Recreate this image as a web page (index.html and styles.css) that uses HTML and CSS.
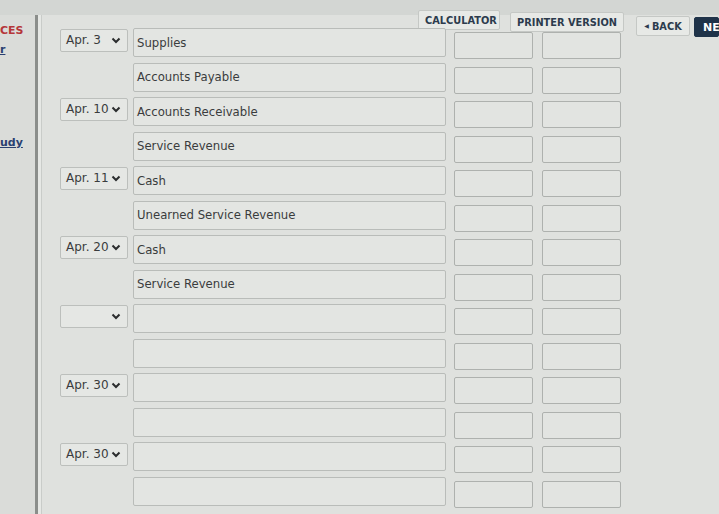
FILE: index.html
```html
<!DOCTYPE html>
<html>
<head>
<meta charset="utf-8">
<link rel="stylesheet" href="styles.css">
</head>
<body>
<div class="topstrip"></div>
<div class="page">
  <aside class="sidebar">
    <div class="side-item res">CES</div>
    <div class="side-item link">r</div>
    <div class="side-item link study">udy</div>
  </aside>
  <div class="divider"></div>
  <main class="main">
    <div class="toolbar">
      <button class="tbtn calc">CALCULATOR</button>
      <button class="tbtn print">PRINTER VERSION</button>
      <button class="tbtn back"><span class="tri">&#9664;</span>BACK</button>
      <button class="tbtn next">NE</button>
    </div>
    <div class="journal">
      <div class="row"><div class="date">Apr. 3<svg class="chev" viewBox="0 0 10 7"><polyline points="1.5,1.5 5,5 8.5,1.5"/></svg></div><div class="acct">Supplies</div><div class="amt"></div><div class="amt"></div></div>
      <div class="row"><div></div><div class="acct">Accounts Payable</div><div class="amt"></div><div class="amt"></div></div>
      <div class="row"><div class="date">Apr. 10<svg class="chev" viewBox="0 0 10 7"><polyline points="1.5,1.5 5,5 8.5,1.5"/></svg></div><div class="acct">Accounts Receivable</div><div class="amt"></div><div class="amt"></div></div>
      <div class="row"><div></div><div class="acct">Service Revenue</div><div class="amt"></div><div class="amt"></div></div>
      <div class="row"><div class="date">Apr. 11<svg class="chev" viewBox="0 0 10 7"><polyline points="1.5,1.5 5,5 8.5,1.5"/></svg></div><div class="acct">Cash</div><div class="amt"></div><div class="amt"></div></div>
      <div class="row"><div></div><div class="acct">Unearned Service Revenue</div><div class="amt"></div><div class="amt"></div></div>
      <div class="row"><div class="date">Apr. 20<svg class="chev" viewBox="0 0 10 7"><polyline points="1.5,1.5 5,5 8.5,1.5"/></svg></div><div class="acct">Cash</div><div class="amt"></div><div class="amt"></div></div>
      <div class="row"><div></div><div class="acct">Service Revenue</div><div class="amt"></div><div class="amt"></div></div>
      <div class="row"><div class="date"><svg class="chev" viewBox="0 0 10 7"><polyline points="1.5,1.5 5,5 8.5,1.5"/></svg></div><div class="acct"></div><div class="amt"></div><div class="amt"></div></div>
      <div class="row"><div></div><div class="acct"></div><div class="amt"></div><div class="amt"></div></div>
      <div class="row"><div class="date">Apr. 30<svg class="chev" viewBox="0 0 10 7"><polyline points="1.5,1.5 5,5 8.5,1.5"/></svg></div><div class="acct"></div><div class="amt"></div><div class="amt"></div></div>
      <div class="row"><div></div><div class="acct"></div><div class="amt"></div><div class="amt"></div></div>
      <div class="row"><div class="date">Apr. 30<svg class="chev" viewBox="0 0 10 7"><polyline points="1.5,1.5 5,5 8.5,1.5"/></svg></div><div class="acct"></div><div class="amt"></div><div class="amt"></div></div>
      <div class="row"><div></div><div class="acct"></div><div class="amt"></div><div class="amt"></div></div>
    </div>
  </main>
</div>
</body>
</html>
```
FILE: styles.css
```css
html, body {
  margin: 0;
  padding: 0;
  width: 719px;
  height: 514px;
  overflow: hidden;
  background: #dfe1de;
  font-family: "DejaVu Sans", Verdana, sans-serif;
}
.topstrip {
  height: 15px;
  background: #d3d6d3;
}
.page {
  display: flex;
  height: 499px;
}
.sidebar {
  width: 35px;
  flex: none;
  background: #dadcd9;
  overflow: hidden;
  padding-top: 9px;
  box-sizing: border-box;
}
.side-item {
  white-space: nowrap;
  font-size: 11px;
  font-weight: bold;
  line-height: 14px;
  padding-left: 0;
}
.side-item.res {
  color: #b5363a;
}
.side-item.link {
  color: #2a4070;
  text-decoration: underline;
  margin-top: 5px;
}
.side-item.study {
  margin-top: 79px;
}
.divider {
  width: 3px;
  flex: none;
  background: #8b8e8b;
  border-right: 3px solid #e6e8e5;
}
.main {
  flex: 1;
  min-width: 0;
  border-left: 1px solid #c9ccc9;
  padding-left: 18px;
}
.toolbar {
  height: 11px;
  display: flex;
  justify-content: flex-end;
  align-items: flex-start;
}
.tbtn {
  margin-top: -5px;
  height: 20px;
  padding: 0 6px;
  border: 1px solid #c5c8c5;
  border-radius: 2px;
  background: #e7e9e6;
  color: #2c3b4d;
  font-family: "DejaVu Sans", Verdana, sans-serif;
  font-weight: bold;
  font-size: 9.8px;
  white-space: nowrap;
}
.tbtn.calc {
  width: 82px;
}
.tbtn.print {
  margin-left: 10px;
  margin-top: -3px;
  width: 114px;
}
.tbtn.back {
  margin-left: 12px;
  margin-top: 1px;
  width: 54px;
  padding: 0 4px;
}
.tri {
  font-size: 6px;
  vertical-align: 2px;
  margin-right: 3px;
}
.tbtn.next {
  margin-top: 2px;
  margin-left: 4px;
  background: #1f3349;
  border-color: #1f3349;
  color: #ffffff;
  width: 25px;
  text-align: left;
  padding: 0 0 0 8px;
  font-size: 11px;
}
.journal {
  display: flex;
  flex-direction: column;
  gap: 5.5px;
}
.row {
  display: grid;
  grid-template-columns: 68px 312px 81px 82px;
  column-gap: 6px;
  align-items: center;
  height: 29px;
}
.row > .acct { margin-left: -1px; }
.row > .amt:nth-child(3) { margin-left: 2px; }
.row > .amt:nth-child(4) { margin-left: 3px; }
.date {
  height: 23px;
  margin-bottom: 5px;
  border: 1px solid #bcbfbc;
  border-radius: 2px;
  background: #e5e7e4;
  box-sizing: border-box;
  display: flex;
  align-items: center;
  padding-left: 5px;
  padding-right: 6px;
  font-size: 12px;
  color: #3a3c3d;
}
.chev {
  width: 10px;
  height: 7px;
  margin-left: auto;
  fill: none;
  stroke: #2b2d2e;
  stroke-width: 2;
}
.acct {
  height: 29px;
  box-sizing: border-box;
  border: 1px solid #b9bcb9;
  border-radius: 2px;
  background: #e3e5e2;
  padding-left: 3px;
  display: flex;
  align-items: center;
  font-size: 11.7px;
  color: #3a3c3d;
  white-space: nowrap;
}
.amt {
  height: 27px;
  margin-top: 6px;
  box-sizing: border-box;
  border: 1px solid #aeb1ae;
  border-radius: 2px;
  background: #e2e4e1;
}
```
